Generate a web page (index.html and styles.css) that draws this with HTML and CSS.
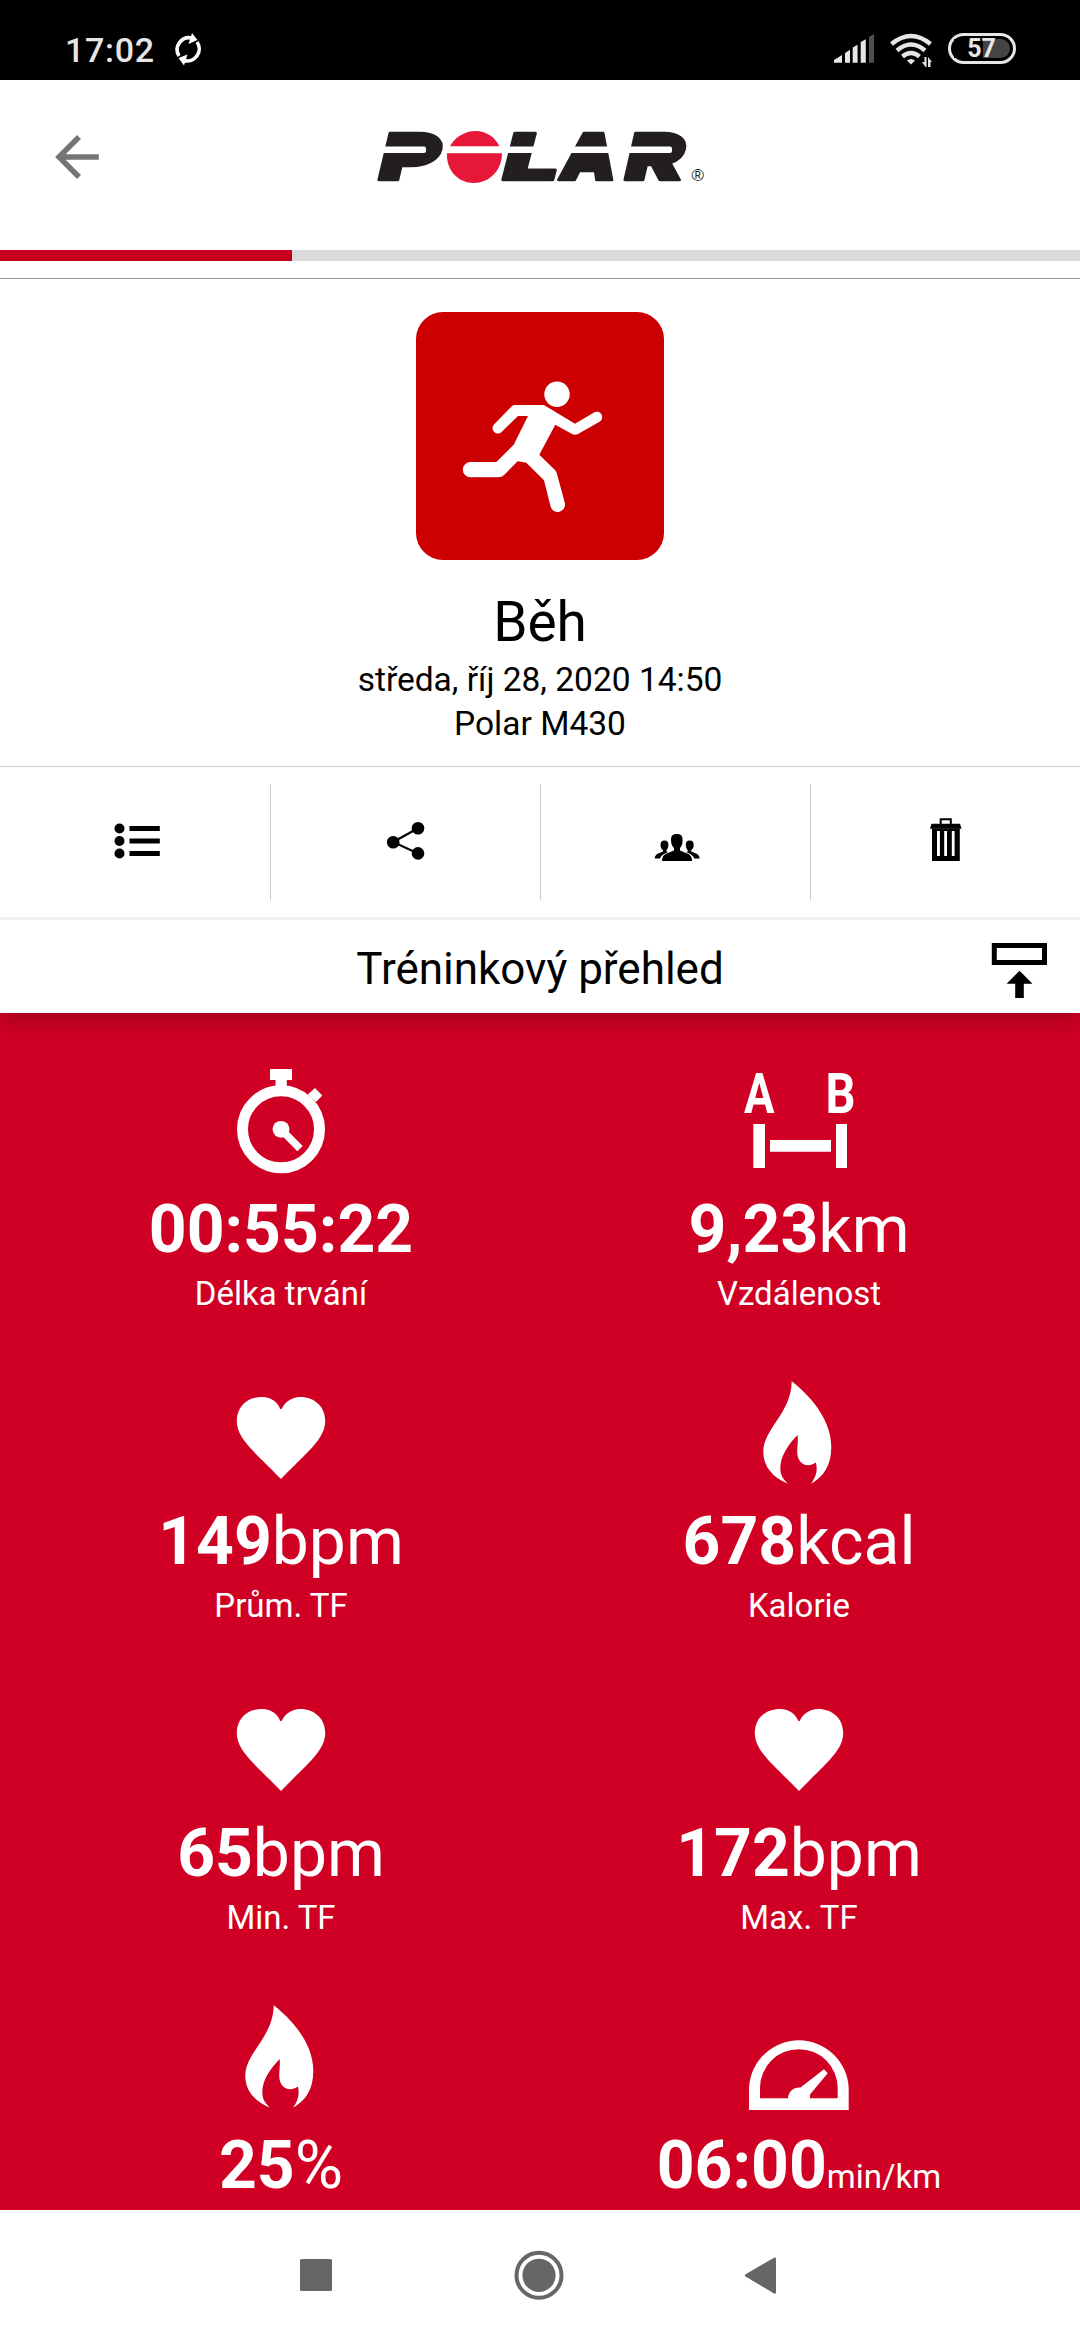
FILE: index.html
```html
<!DOCTYPE html>
<html lang="cs">
<head>
<meta charset="utf-8">
<title>Polar – Běh</title>
<link rel="stylesheet" href="styles.css">
</head>
<body>
<svg class="defs" aria-hidden="true">
  <symbol id="heart" viewBox="0 0 132 132"><path d="M66 110C40 83 21.8 70 21.8 52C21.8 37 33 28 47 28C57 28 63 34 65 39.5Q66 40.5 67 39.5C69 34 76 28 85.500 28C99 28 110.200 37 110.200 52C110.200 70 92 83 66 110Z"/></symbol>
  <symbol id="flame" viewBox="0 0 132 132"><path d="M58.700 12.300C70 21 98.300 46 98.300 78C98.300 97 90 108 78 114.700C83 108 85 101 82.800 93.500C74 100 65.500 94 64.500 86C63.600 80 65.500 74 64.600 66C55 76 46.500 88 47.400 101C47.800 107 51 111 54.900 114.700C39 108 30.300 97 30.300 82.700C30.300 60 58.500 44 58.700 12.300Z"/></symbol>
</svg>
<div class="screen">
  <div class="status">
    <div class="status-left">
      <span class="clock">17:02</span>
      <svg class="sync" width="32" height="36" viewBox="172 31 32 36"><g fill="none" stroke="#fff" stroke-width="3.600"><path d="M179 56A12 12 0 0 1 192 38"/><path d="M197 42A12 12 0 0 1 184 60.500"/></g><path fill="#fff" d="M192 33L197.500 40L188.500 44ZM184 65.500L178.500 58L187.500 54.500Z"/></svg>
    </div>
    <div class="status-right">
      <svg width="98" height="40" viewBox="834 30 98 40" fill="#e6e6e6">
        <path d="M834 62.700V60L842 55V62.700ZM845 62.700V53L850 49.700V62.700ZM852.700 62.700V47.500L857.600 44.700V62.700ZM860.700 62.700V42L865.800 39.300V62.700Z"/>
        <path fill="#505050" d="M869 62.700V37L874 34V62.700Z"/>
        <g fill="none" stroke="#e6e6e6" stroke-width="4.400"><path d="M891.500 44Q911 28 930.500 44"/><path d="M897 50.500Q911 38.500 925 50.500"/><path d="M902.500 56.500Q911 49.500 919.500 56.500"/></g>
        <path d="M907 60.500Q911 57.500 915 60.500L911 64.500Z"/>
        <path d="M922 62H924.500V57H926.500V67H925.500ZM928 57L932 62H930.500V67H928Z"/>
      </svg>
      <div class="battery"><span>57</span></div>
    </div>
  </div>

  <header class="appbar">
    <svg class="back" width="46" height="50" viewBox="54 132 46 50" fill="none" stroke="#757575" stroke-width="5.500"><path d="M98.800 157H60M79 137L59 157L79 177"/></svg>
    <svg class="logo" width="340" height="110" viewBox="373 100 340 110" role="img" aria-label="Polar">
      <g class="wordmark">
        <text transform="translate(379 180) scale(1.43 1)">P</text>
        <text transform="translate(503 180) scale(1.54 1)">L</text>
        <text transform="translate(560 180) scale(1.1 1)">A</text>
        <text transform="translate(625 180) scale(1.37 1)">R</text>
      </g>
      <path fill="#231f20" d="M399 139H428V160H394ZM646 139H674V160H641ZM583 142H600V164H578Z"/>
      <rect x="382" y="146.500" width="44" height="6.500" rx="2" fill="#fff"/>
      <rect x="503" y="146.500" width="116" height="6.500" fill="#fff"/>
      <rect x="626" y="146.500" width="46" height="6.500" rx="2" fill="#fff"/>
      <path fill="#e61738" d="M450 146.300C455 137 465 131 475.500 131C486 131 495 137 499.500 146.300ZM447 153.300H502C502 171 489 183 473.500 183C459 183 446 171 447 153.300Z"/>
      <text class="reg" x="691.500" y="181">®</text>
    </svg>
  </header>
  <div class="progress"><div class="progress-done"></div></div>

  <section class="hero">
    <div class="sport">
      <svg width="248" height="248" viewBox="0 0 248 248" fill="#fff"><circle cx="141" cy="82.300" r="12.700"/><path d="M98 93H126.700Q128 93 130 94.200L159 111.700L178 100.400A5.400 5.400 0 0 1 183.500 109.800L162 122Q159 123.500 156 122L139.300 112.700L123.300 142.700L139 158Q140.500 160 141 162L148.800 190.800A7.300 7.300 0 0 1 134.600 194.600L128 168.300L110.300 150.700L101.700 149.300L88 163Q86 165.300 82 165.300H54.500A7.650 7.650 0 0 1 54.500 150H80.300L97.700 132.700L112 104H102L85.600 120A5.300 5.300 0 0 1 78 112.500L95.500 94.500Q97 93 98 93Z"/></svg>
    </div>
    <h1>Běh</h1>
    <p>středa, říj 28, 2020 14:50</p>
    <p>Polar M430</p>
  </section>

  <nav class="tools">
    <div class="tool"><svg width="60" height="60" viewBox="105 812 60 60"><circle cx="118.500" cy="828.500" r="5"/><circle cx="118.500" cy="841" r="5"/><circle cx="118.500" cy="853.500" r="5"/><path d="M128.500 826H158.800V831H128.500ZM128.500 838.500H158.800V843.500H128.500ZM128.500 851H158.800V856H128.500Z"/></svg></div>
    <div class="tool"><svg width="60" height="60" viewBox="375 812 60 60"><path d="M417 828.300L392.200 842L417 853.400" fill="none" stroke="#000" stroke-width="2.200"/><circle cx="392.200" cy="842.200" r="6.300"/><circle cx="417" cy="828.300" r="6.300"/><circle cx="417" cy="853.400" r="6.300"/></svg></div>
    <div class="tool"><svg width="60" height="60" viewBox="645 812 60 60"><path d="M670 840C670 835.500 672 834 675.800 834C679.600 834 681.600 835.500 681.600 840C681.600 844 680.500 846.500 679 848V850.500L687.500 854Q691 856 691 861H661Q661 856 664.500 854L673 850.500V848C671.500 846.500 670 844 670 840Z"/><path d="M659.500 845C659.500 842 660.500 840.500 663.500 840.500C666.500 840.500 667.400 842 667.400 845C667.400 847.500 666.500 849 665.500 850V851.500L667 852L663 854Q660 855.500 658.800 858.500H653.600Q653.800 855.500 656 854L662 851.500V850C660.500 849 659.500 847.500 659.500 845Z"/><path d="M692.700 845C692.700 842 691.700 840.500 688.700 840.500C685.700 840.500 684.800 842 684.800 845C684.800 847.500 685.700 849 686.700 850V851.500L685.200 852L689.200 854Q692.200 855.500 693.400 858.500H698.800Q698.400 855.500 696.200 854L690.200 851.500V850C691.700 849 692.700 847.500 692.700 845Z"/></svg></div>
    <div class="tool"><svg width="60" height="60" viewBox="915 812 60 60"><path fill-rule="evenodd" d="M931 828.500H958.800V861H931ZM936 831V856H938.900V831ZM943.200 831V856H946V831ZM950.800 831V856H953.600V831Z"/><path d="M930.500 823.700H959L960.500 828.700H929Z"/><path d="M939.700 824.500V819.300H949.800V824.500" fill="none" stroke="#000" stroke-width="2"/></svg></div>
  </nav>

  <div class="section-title">
    <h2>Tréninkový přehled</h2>
    <svg class="collapse" width="56" height="56" viewBox="991 943 56 56"><rect x="994.300" y="945.500" width="50.200" height="17" fill="none" stroke="#000" stroke-width="5"/><path d="M1019.600 970.700L1032.500 983.700H1023.800V998H1015.200V983.700H1006.600Z"/></svg>
  </div>

  <main class="stats">
    <div class="stat">
      <svg class="icon" viewBox="0 0 132 132"><circle cx="66" cy="72.300" r="38.500" fill="none" stroke="#fff" stroke-width="11"/><path d="M55 12H77V23H71.800V31H60.500V23H55ZM100 31L107.300 38.500L101 45L92.700 37.500Z"/><circle cx="66" cy="72.300" r="8.400"/><path d="M66 72.300L85 91.700" stroke="#fff" stroke-width="7.500"/></svg>
      <div class="value"><b>00:55:22</b></div><div class="label">Délka trvání</div>
    </div>
    <div class="stat">
      <svg class="icon" viewBox="0 0 132 132"><text class="ab" x="11" y="56" textLength="30.500" lengthAdjust="spacingAndGlyphs">A</text><text class="ab" x="92.500" y="56" textLength="30" lengthAdjust="spacingAndGlyphs">B</text><path d="M20.300 67H32V111H20.300ZM103 67H114V111H103ZM37 83H98V94.700H37Z"/></svg>
      <div class="value"><b>9,23</b>km</div><div class="label">Vzdálenost</div>
    </div>
    <div class="stat">
      <svg class="icon"><use href="#heart"/></svg>
      <div class="value"><b>149</b>bpm</div><div class="label">Prům. TF</div>
    </div>
    <div class="stat">
      <svg class="icon"><use href="#flame"/></svg>
      <div class="value"><b>678</b>kcal</div><div class="label">Kalorie</div>
    </div>
    <div class="stat">
      <svg class="icon"><use href="#heart"/></svg>
      <div class="value"><b>65</b>bpm</div><div class="label">Min. TF</div>
    </div>
    <div class="stat">
      <svg class="icon"><use href="#heart"/></svg>
      <div class="value"><b>172</b>bpm</div><div class="label">Max. TF</div>
    </div>
    <div class="stat">
      <svg class="icon"><use href="#flame"/></svg>
      <div class="value"><b>25</b>%</div>
    </div>
    <div class="stat">
      <svg class="icon" viewBox="0 0 132 132"><path fill-rule="evenodd" d="M16 117V95A49.900 49.900 0 0 1 115.700 95V117ZM27 105.300H104.700V95A38.850 38.850 0 0 0 27 95Z"/><path d="M55 106C55 99 60 94 67.500 94.500L91 76.300L94.700 80.300L77 101.500V106Z"/></svg>
      <div class="value"><b>06:00</b><small>min/km</small></div>
    </div>
  </main>

  <footer class="navbar">
    <svg width="60" height="60" viewBox="286 2245 60 60"><rect x="300" y="2259" width="32" height="32" rx="1.500"/></svg>
    <svg width="60" height="60" viewBox="509 2245 60 60"><circle cx="539" cy="2275.300" r="22.500" fill="none" stroke="#666" stroke-width="4"/><circle cx="539" cy="2275.300" r="16.600"/></svg>
    <svg width="60" height="60" viewBox="732 2245 60 60"><path d="M774 2257.800Q776 2257 776 2259V2292Q776 2294.500 774 2293.500L745.500 2276.500Q744 2275.300 745.500 2274.200Z"/></svg>
  </footer>
</div>
</body>
</html>
```

FILE: styles.css
```css
* { box-sizing: border-box; }
body { margin: 0; background: #fff; font-family: Roboto, "Noto Sans", sans-serif; color: #000; }
h1, h2, p { margin: 0; font-weight: 400; }
svg { display: block; flex: none; }
.defs { position: absolute; width: 0; height: 0; }
.screen { width: 1080px; height: 2340px; display: flex; flex-direction: column; overflow: hidden; }
.screen > * { flex: none; }

.status { height: 80px; background: #000; display: flex; justify-content: space-between; padding: 30px 64px 0 65px; }
.status-left, .status-right { display: flex; align-items: flex-start; }
.clock { color: #e6e6e6; font-size: 34px; font-weight: 500; line-height: 40px; width: 107px; letter-spacing: 0.7px; }
.sync { margin-top: 1px; }
.status-right { gap: 16px; }
.battery { width: 68px; height: 31px; margin-top: 3px; border: 3px solid #e6e6e6; border-radius: 16px; padding: 3px; }
.battery span { display: block; height: 19px; border-radius: 0 10px 10px 0; background: linear-gradient(90deg, #000 52%, #444 52%); color: #e6e6e6; font-size: 25px; font-weight: 700; line-height: 19px; text-align: center; padding-right: 1px; }

.appbar { height: 170px; display: flex; align-items: flex-start; padding-left: 54px; }
.back { margin-top: 52px; }
.logo { margin: 20px 0 0 273px; }
.wordmark { font: italic 900 65px Inter, sans-serif; fill: #231f20; stroke: #231f20; stroke-width: 2.5px; stroke-linejoin: round; }
.reg { font: 17px "Liberation Sans", sans-serif; fill: #231f20; }
.progress { height: 11px; background: #dadada; }
.progress-done { width: 292px; height: 11px; background: #c8001e; }

.hero { height: 489px; margin-top: 17px; border-top: 1px solid #999; border-bottom: 1px solid #ccc; padding-top: 33px; display: flex; flex-direction: column; align-items: center; }
.sport { width: 248px; height: 248px; border-radius: 27px; background: #c00; }
.hero h1 { margin-top: 27px; font-size: 55px; line-height: 71px; }
.hero p { font-size: 33.5px; line-height: 44px; }

.tools { height: 153px; display: grid; grid-template-columns: repeat(4, 1fr); padding: 17px 0; border-bottom: 3px solid #f0f0f0; }
.tool { display: flex; justify-content: center; align-items: center; border-left: 1px solid #ccc; }
.tool:first-child { border-left-color: transparent; }

.section-title { position: relative; z-index: 1; height: 93px; background: #fff; display: grid; grid-template-columns: 56px 1fr 56px; align-items: start; padding: 0 33px; box-shadow: 0 5px 26px rgba(0, 0, 0, 0.26); clip-path: inset(0 0 -50px 0); }
.section-title h2 { grid-column: 2; text-align: center; font-size: 44px; line-height: 98px; height: 93px; }
.collapse { margin-top: 23px; }

.stats { height: 1197px; background: #d00024; color: #fff; padding: 44px 22px 0; display: grid; grid-template-columns: 1fr 1fr; grid-auto-rows: 312px; align-content: start; overflow: hidden; }
.stat { display: flex; flex-direction: column; align-items: center; }
.icon { width: 132px; height: 132px; fill: #fff; }
.value { font-size: 66px; line-height: 81px; height: 81px; white-space: nowrap; }
.value b { font-weight: 700; }
.value small { font-size: 33px; }
.label { font-size: 33px; line-height: 48px; }
.ab { font: 700 55px Roboto, sans-serif; }

.navbar { height: 130px; background: #fff; display: flex; align-items: center; gap: 163px; padding-left: 286px; fill: #666; }
```
